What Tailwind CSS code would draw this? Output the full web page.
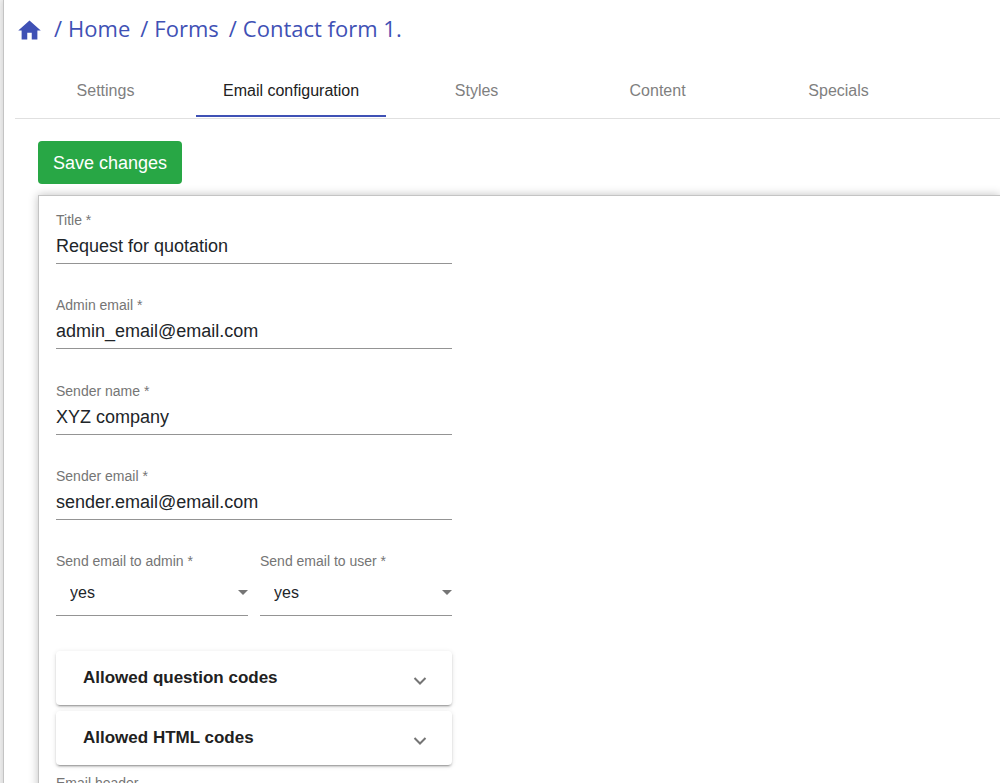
<!DOCTYPE html>
<html lang="en">
<head>
<meta charset="utf-8">
<meta name="viewport" content="width=device-width, initial-scale=1">
<title>Contact form 1.</title>
<script src="https://cdn.jsdelivr.net/npm/@tailwindcss/browser@4"></script>
</head>
<body class="bg-[#f0f0f0] pl-[3px] font-['Liberation_Sans',Arial,sans-serif] text-[#212529] overflow-x-hidden">
<main class="min-h-screen border-l border-[#c4c4c4] bg-white pl-[11px] pb-8 shadow-[0_0_6px_rgba(0,0,0,0.15)]">
  <nav aria-label="Breadcrumb" class="flex h-[63px] items-center pb-[3px] pl-px font-['Open_Sans','Noto_Sans',sans-serif] text-[22px] text-[#3f51b5]">
    <a href="#" aria-label="Dashboard" class="mr-[11px]">
      <svg class="block h-[27px] w-[27px]" viewBox="0 0 24 24" fill="currentColor" aria-hidden="true"><path d="M10 20v-6h4v6h5v-8h3L12 3 2 12h3v8z"/></svg>
    </a>
    <ol class="flex gap-[10px] pb-[3px]">
      <li class="flex gap-[6px]"><span>/</span><a href="#">Home</a></li>
      <li class="flex gap-[6px]"><span>/</span><a href="#">Forms</a></li>
      <li class="flex gap-[6px]"><span>/</span><a href="#">Contact form 1.</a></li>
    </ol>
  </nav>

  <div role="tablist" class="flex border-b border-[#e0e0e0] pb-px text-base text-[#7f7f7f]">
    <button role="tab" class="h-[54px] min-w-[181px] border-b-2 border-transparent px-[27px] pt-1">Settings</button>
    <button role="tab" aria-selected="true" class="h-[54px] min-w-[181px] border-b-2 border-[#3f51b5] px-[27px] pt-1 text-[#212121]">Email configuration</button>
    <button role="tab" class="h-[54px] min-w-[181px] border-b-2 border-transparent px-[27px] pt-1">Styles</button>
    <button role="tab" class="h-[54px] min-w-[181px] border-b-2 border-transparent px-[27px] pt-1">Content</button>
    <button role="tab" class="h-[54px] min-w-[181px] border-b-2 border-transparent px-[27px] pt-1">Specials</button>
  </div>

  <form class="pl-[23px] pt-[22px]">
    <button type="button" class="h-[43px] rounded bg-[#28a745] px-[15px] text-lg text-white">Save changes</button>

    <section class="mt-[11px] border-l border-t border-[#c4c4c4] bg-white px-[17px] pt-[14px] pb-6 shadow-[0_0_9px_rgba(0,0,0,0.25)]">
      <div class="w-full max-w-[396px]">
        <div class="mb-[31px] flex flex-col">
          <label for="title" class="text-sm leading-5 text-[#757575]">Title *</label>
          <input id="title" type="text" value="Request for quotation" class="h-[34px] border-b border-[#949494] text-lg outline-none">
        </div>
        <div class="mb-8 flex flex-col">
          <label for="admin-email" class="text-sm leading-5 text-[#757575]">Admin email *</label>
          <input id="admin-email" type="email" value="admin_email@email.com" class="h-[34px] border-b border-[#949494] text-lg outline-none">
        </div>
        <div class="mb-[31px] flex flex-col">
          <label for="sender-name" class="text-sm leading-5 text-[#757575]">Sender name *</label>
          <input id="sender-name" type="text" value="XYZ company" class="h-[34px] border-b border-[#949494] text-lg outline-none">
        </div>
        <div class="mb-[31px] flex flex-col">
          <label for="sender-email" class="text-sm leading-5 text-[#757575]">Sender email *</label>
          <input id="sender-email" type="email" value="sender.email@email.com" class="h-[34px] border-b border-[#949494] text-lg outline-none">
        </div>

        <div class="mb-[35px] grid grid-cols-2 gap-3">
          <div class="flex flex-col">
            <label for="to-admin" class="text-sm leading-5 text-[#757575]">Send email to admin *</label>
            <div class="relative">
              <select id="to-admin" class="block h-[45px] w-full appearance-none border-b border-[#949494] bg-transparent pl-[14px] text-base outline-none"><option>yes</option><option>no</option></select>
              <svg class="pointer-events-none absolute right-0 top-[19px] h-[5px] w-[10px] text-[#757575]" viewBox="0 0 10 5" fill="currentColor" aria-hidden="true"><path d="M0 0h10L5 5z"/></svg>
            </div>
          </div>
          <div class="flex flex-col">
            <label for="to-user" class="text-sm leading-5 text-[#757575]">Send email to user *</label>
            <div class="relative">
              <select id="to-user" class="block h-[45px] w-full appearance-none border-b border-[#949494] bg-transparent pl-[14px] text-base outline-none"><option>yes</option><option>no</option></select>
              <svg class="pointer-events-none absolute right-0 top-[19px] h-[5px] w-[10px] text-[#757575]" viewBox="0 0 10 5" fill="currentColor" aria-hidden="true"><path d="M0 0h10L5 5z"/></svg>
            </div>
          </div>
        </div>

        <div class="flex flex-col gap-[6px]">
          <button type="button" aria-expanded="false" class="flex h-[54px] items-center justify-between rounded pl-[27px] pr-[25px] text-[17px] font-bold text-[#212121] shadow-[0_3px_1px_-2px_rgba(0,0,0,0.2),0_2px_2px_0_rgba(0,0,0,0.14),0_1px_5px_0_rgba(0,0,0,0.12)]">
            <span>Allowed question codes</span>
            <svg class="mt-[5px] h-[8px] w-[14px] text-[#757575]" viewBox="0 0 14 8" fill="none" stroke="currentColor" stroke-width="2" aria-hidden="true"><path d="M1.5 1 7 6.5 12.5 1"/></svg>
          </button>
          <button type="button" aria-expanded="false" class="flex h-[54px] items-center justify-between rounded pl-[27px] pr-[25px] text-[17px] font-bold text-[#212121] shadow-[0_3px_1px_-2px_rgba(0,0,0,0.2),0_2px_2px_0_rgba(0,0,0,0.14),0_1px_5px_0_rgba(0,0,0,0.12)]">
            <span>Allowed HTML codes</span>
            <svg class="mt-[5px] h-[8px] w-[14px] text-[#757575]" viewBox="0 0 14 8" fill="none" stroke="currentColor" stroke-width="2" aria-hidden="true"><path d="M1.5 1 7 6.5 12.5 1"/></svg>
          </button>
        </div>

        <div class="mt-2 flex flex-col">
          <label for="email-header" class="text-sm leading-5 text-[#757575]">Email header</label>
          <textarea id="email-header" rows="3" class="border-b border-[#949494] text-lg outline-none"></textarea>
        </div>
      </div>
    </section>
  </form>
</main>
</body>
</html>
